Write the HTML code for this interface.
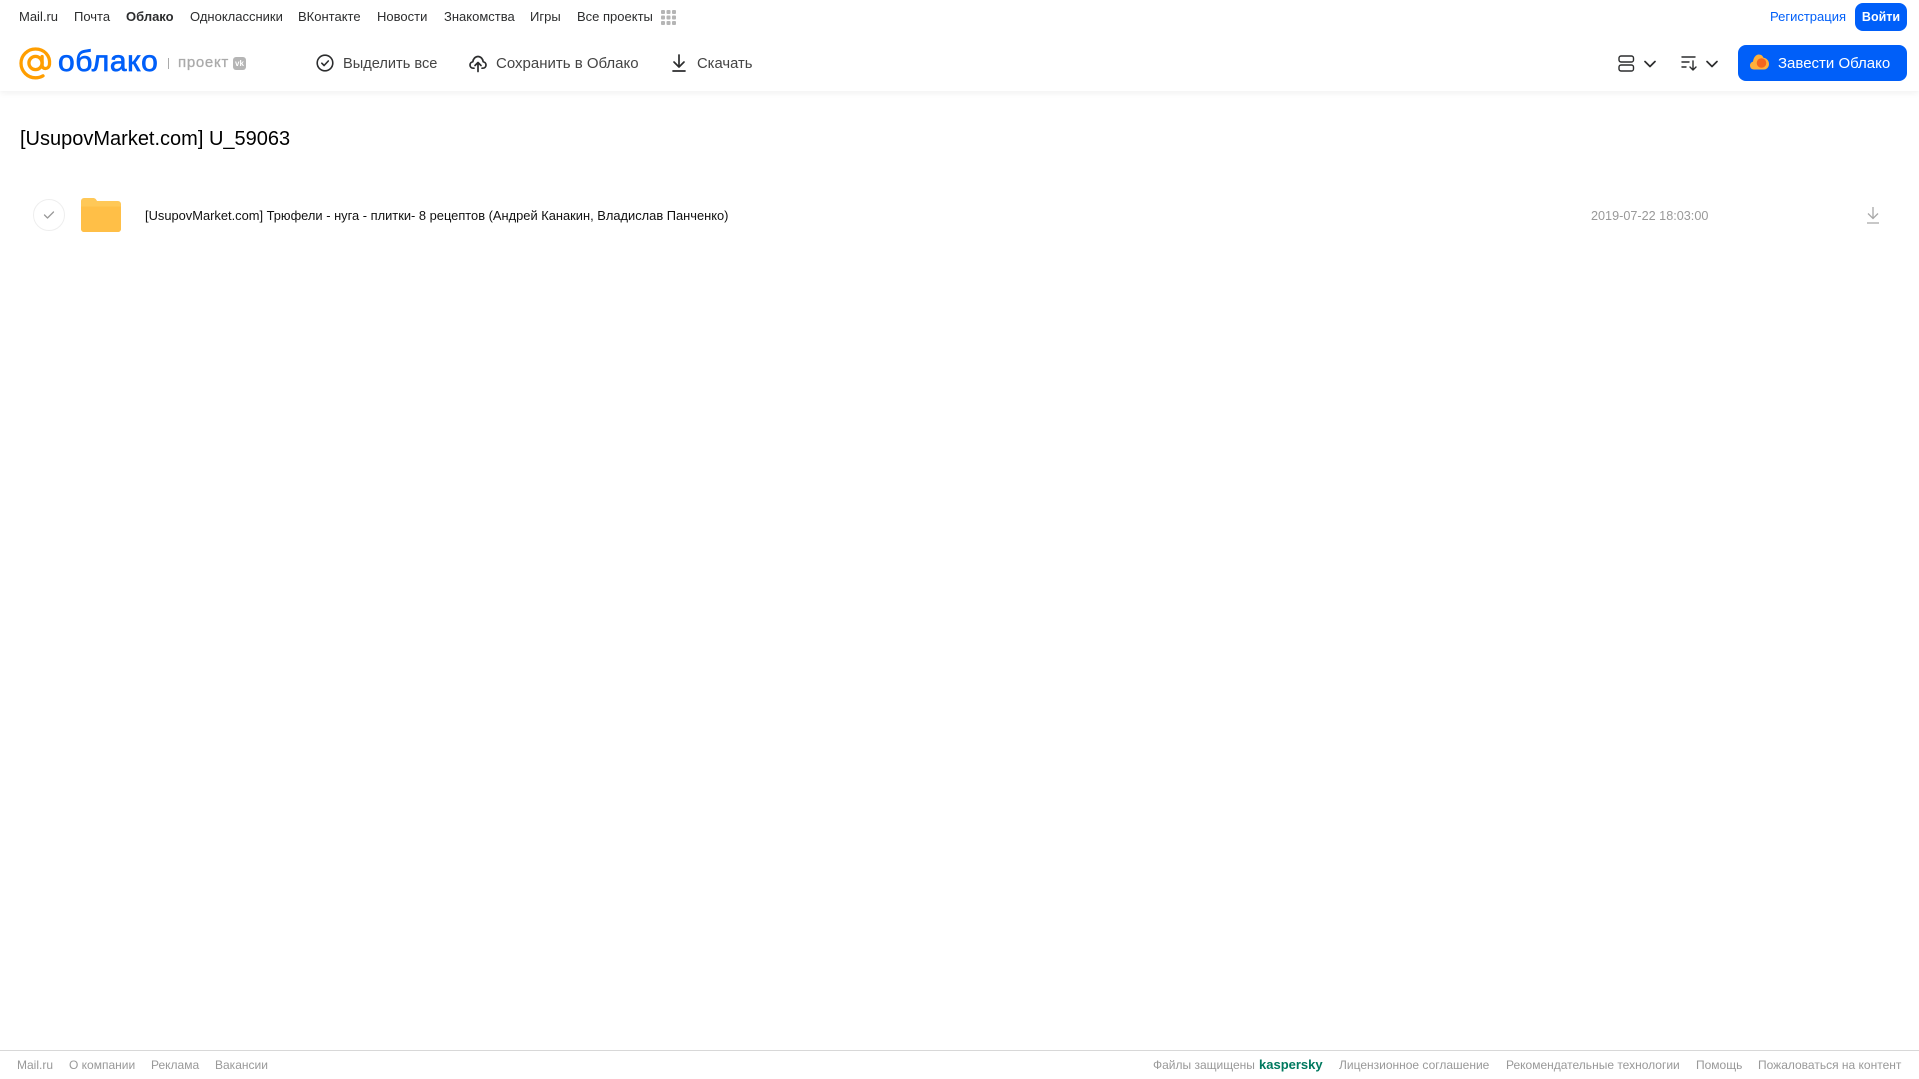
<!DOCTYPE html>
<html lang="ru"><head><meta charset="utf-8"><title>Облако</title>
<style>
html,body{margin:0;padding:0;background:#fff;width:1919px;height:1079px;overflow:hidden;font-family:"Liberation Sans","Noto Sans CJK SC",sans-serif}
.t{position:absolute;white-space:nowrap;line-height:16px}
.n{top:9px;font-size:13px;color:#2c2d2e}
.a{top:56px;font-size:15px;color:#444}
.f{top:1057px;font-size:12px;color:#999}
svg{position:absolute;overflow:visible}
</style></head><body>
<div style="position:absolute;left:0;top:0;width:1919px;height:91px;background:#fff;box-shadow:0 2px 6px rgba(0,0,0,.06)"></div>

<span class="t n" style="left:19px">Mail.ru</span>
<span class="t n" style="left:74px">Почта</span>
<span class="t n" style="left:126px;font-weight:bold">Облако</span>
<span class="t n" style="left:190px">Одноклассники</span>
<span class="t n" style="left:298px">ВКонтакте</span>
<span class="t n" style="left:377px">Новости</span>
<span class="t n" style="left:444px">Знакомства</span>
<span class="t n" style="left:530px">Игры</span>
<span class="t n" style="left:577px">Все проекты</span>
<svg style="left:661px;top:10px" width="15" height="15" fill="#b5b5b5"><rect width="4" height="4" rx="1"/><rect x="5.500" width="4" height="4" rx="1"/><rect x="11" width="4" height="4" rx="1"/><rect y="5.500" width="4" height="4" rx="1"/><rect x="5.500" y="5.500" width="4" height="4" rx="1"/><rect x="11" y="5.500" width="4" height="4" rx="1"/><rect y="11" width="4" height="4" rx="1"/><rect x="5.500" y="11" width="4" height="4" rx="1"/><rect x="11" y="11" width="4" height="4" rx="1"/></svg>

<span class="t" style="left:1770px;top:9px;font-size:13px;color:#005ff9">Регистрация</span>
<div style="position:absolute;left:1855px;top:3px;width:52px;height:28px;border-radius:8px;background:#005ff9;color:#fff;font-size:12.500px;font-weight:bold;line-height:28px;text-align:center">Войти</div>

<svg style="left:19px;top:47px" width="33" height="33" viewBox="0 0 33 33" fill="none" stroke="#ff9e00" stroke-width="3.300" stroke-linecap="round"><circle cx="16.500" cy="16" r="6.600"/><path d="M23.100 9.500V18c0 5 6.800 4.600 7.400-.6C31.500 8.500 25 2 16.500 2 8.500 2 2 8.500 2 16.300c0 8 6.500 14.500 14.500 14.500 3 0 5.500-.8 7.500-2"/></svg>
<span class="t" style="left:58px;top:44px;font-size:30px;line-height:36px;color:#005ff9;-webkit-text-stroke:.7px #005ff9;letter-spacing:.6px">облако</span>
<div style="position:absolute;left:168px;top:58px;width:1px;height:11px;background:#aaa"></div>
<span class="t" style="left:178px;top:55px;font-size:15px;color:#aaa;-webkit-text-stroke:.3px #aaa;letter-spacing:.7px">проект</span>
<div style="position:absolute;left:233px;top:57px;width:13px;height:13px;border-radius:3px;background:#b5b5b5;color:#fff;font-size:8px;font-weight:bold;line-height:13px;text-align:center">vk</div>

<svg style="left:316px;top:54px" width="18" height="18" fill="none" stroke="#2c2d2e" stroke-width="1.600" stroke-linecap="round" stroke-linejoin="round"><circle cx="9" cy="9" r="7.800"/><path d="M5.800 9.200l2.300 2.300 4.200-4.500"/></svg>
<span class="t a" style="left:343px;font-size:14.600px">Выделить все</span>

<svg style="left:469px;top:54px" width="18" height="18" fill="none" stroke="#2c2d2e" stroke-width="1.700" stroke-linecap="round" stroke-linejoin="round"><path d="M5 14.200H4.300C2.300 14.200 1 12.700 1 11c0-1.700 1.300-3 2.800-3.200C4.200 4.800 6.300 2.500 9 2.500s4.800 2.300 5.200 5.300C15.700 8 17 9.300 17 11c0 1.700-1.300 3.200-3.300 3.200H13"/><path d="M9 17.500V9M6 11.500l3-3 3 3"/></svg>
<span class="t a" style="left:496px">Сохранить в Облако</span>

<svg style="left:671px;top:54px" width="16" height="18" fill="none" stroke="#2c2d2e" stroke-width="1.700" stroke-linecap="round" stroke-linejoin="round"><path d="M8 1v11.500M3 8l5 5 5-5M2 17h12"/></svg>
<span class="t a" style="left:697px;font-size:14.800px">Скачать</span>

<svg style="left:1618px;top:55px" width="17" height="17" fill="none" stroke="#2c2d2e" stroke-width="1.400"><rect x="1" y="1" width="14.500" height="6" rx="2"/><rect x="1" y="10" width="14.500" height="6" rx="2"/></svg>
<svg style="left:1644px;top:60px" width="12" height="8" fill="none" stroke="#2c2d2e" stroke-width="1.700" stroke-linecap="round" stroke-linejoin="round"><path d="M1 1.500l5 5 5-5"/></svg>
<svg style="left:1681px;top:55px" width="17" height="16" fill="none" stroke="#2c2d2e" stroke-width="1.400" stroke-linecap="round" stroke-linejoin="round"><path d="M1 2h13M1 7h7M1 12h4M12 6v9M9 12l3 3 3-3"/></svg>
<svg style="left:1706px;top:60px" width="12" height="8" fill="none" stroke="#2c2d2e" stroke-width="1.700" stroke-linecap="round" stroke-linejoin="round"><path d="M1 1.500l5 5 5-5"/></svg>

<div style="position:absolute;left:1738px;top:45px;width:169px;height:36px;border-radius:8px;background:#005ff9"></div>
<svg style="left:1750px;top:54px" width="19" height="16"><path d="M4 15.500C1.500 15.500 0 13.700 0 11.500 0 9.500 1.300 8 3 7.600 3.500 3.500 6 .5 8.800.5c2.300 0 4 1.400 4.700 3.300C16.500 4 19 6.800 19 10c0 3-2.200 5.500-5 5.500z" fill="#ffb03a"/><circle cx="11.500" cy="9" r="4.800" fill="#f4661f"/></svg>
<span class="t" style="left:1778px;top:56px;font-size:15px;color:#fff">Завести Облако</span>

<span class="t" style="left:20px;top:127px;font-size:20px;line-height:24px;color:#000">[UsupovMarket.com] U_59063</span>

<div style="position:absolute;left:33px;top:199px;width:30px;height:30px;border:1px solid #eee;border-radius:50%"></div>
<svg style="left:43px;top:210px" width="12" height="10" fill="none" stroke="#999" stroke-width="1.300" stroke-linecap="round" stroke-linejoin="round"><path d="M1.500 5l3 3 6-6"/></svg>
<svg style="left:81px;top:198px" width="40" height="34"><path d="M0 3a3 3 0 0 1 3-3h9c2 0 3 1 4 3h21a3 3 0 0 1 3 3v25a3 3 0 0 1-3 3H3a3 3 0 0 1-3-3z" fill="#ffc857"/><path d="M0 8.500h40V31a3 3 0 0 1-3 3H3a3 3 0 0 1-3-3z" fill="#ffbf47"/></svg>
<span class="t" style="left:145px;top:208px;font-size:12.880px;color:#111">[UsupovMarket.com] Трюфели - нуга - плитки- 8 рецептов (Андрей Канакин, Владислав Панченко)</span>
<span class="t" style="left:1591px;top:208px;font-size:12.650px;color:#999">2019-07-22 18:03:00</span>
<svg style="left:1866px;top:207px" width="14" height="17" fill="none" stroke="#a8a8a8" stroke-width="1.300"><path d="M7 0v11M2 6.500l5 5 5-5M1 16h12"/></svg>

<div style="position:absolute;left:0;top:1050px;width:1919px;height:1px;background:#d8d8d8"></div>
<span class="t f" style="left:17px">Mail.ru</span>
<span class="t f" style="left:69px">О компании</span>
<span class="t f" style="left:151px">Реклама</span>
<span class="t f" style="left:215px">Вакансии</span>
<span class="t f" style="left:1153px">Файлы защищены</span>
<span class="t" style="left:1259px;top:1057px;font-size:13px;font-weight:bold;color:#00795f">kaspersky</span>
<span class="t f" style="left:1339px">Лицензионное соглашение</span>
<span class="t f" style="left:1506px">Рекомендательные технологии</span>
<span class="t f" style="left:1696px">Помощь</span>
<span class="t f" style="left:1758px">Пожаловаться на контент</span>
</body></html>
